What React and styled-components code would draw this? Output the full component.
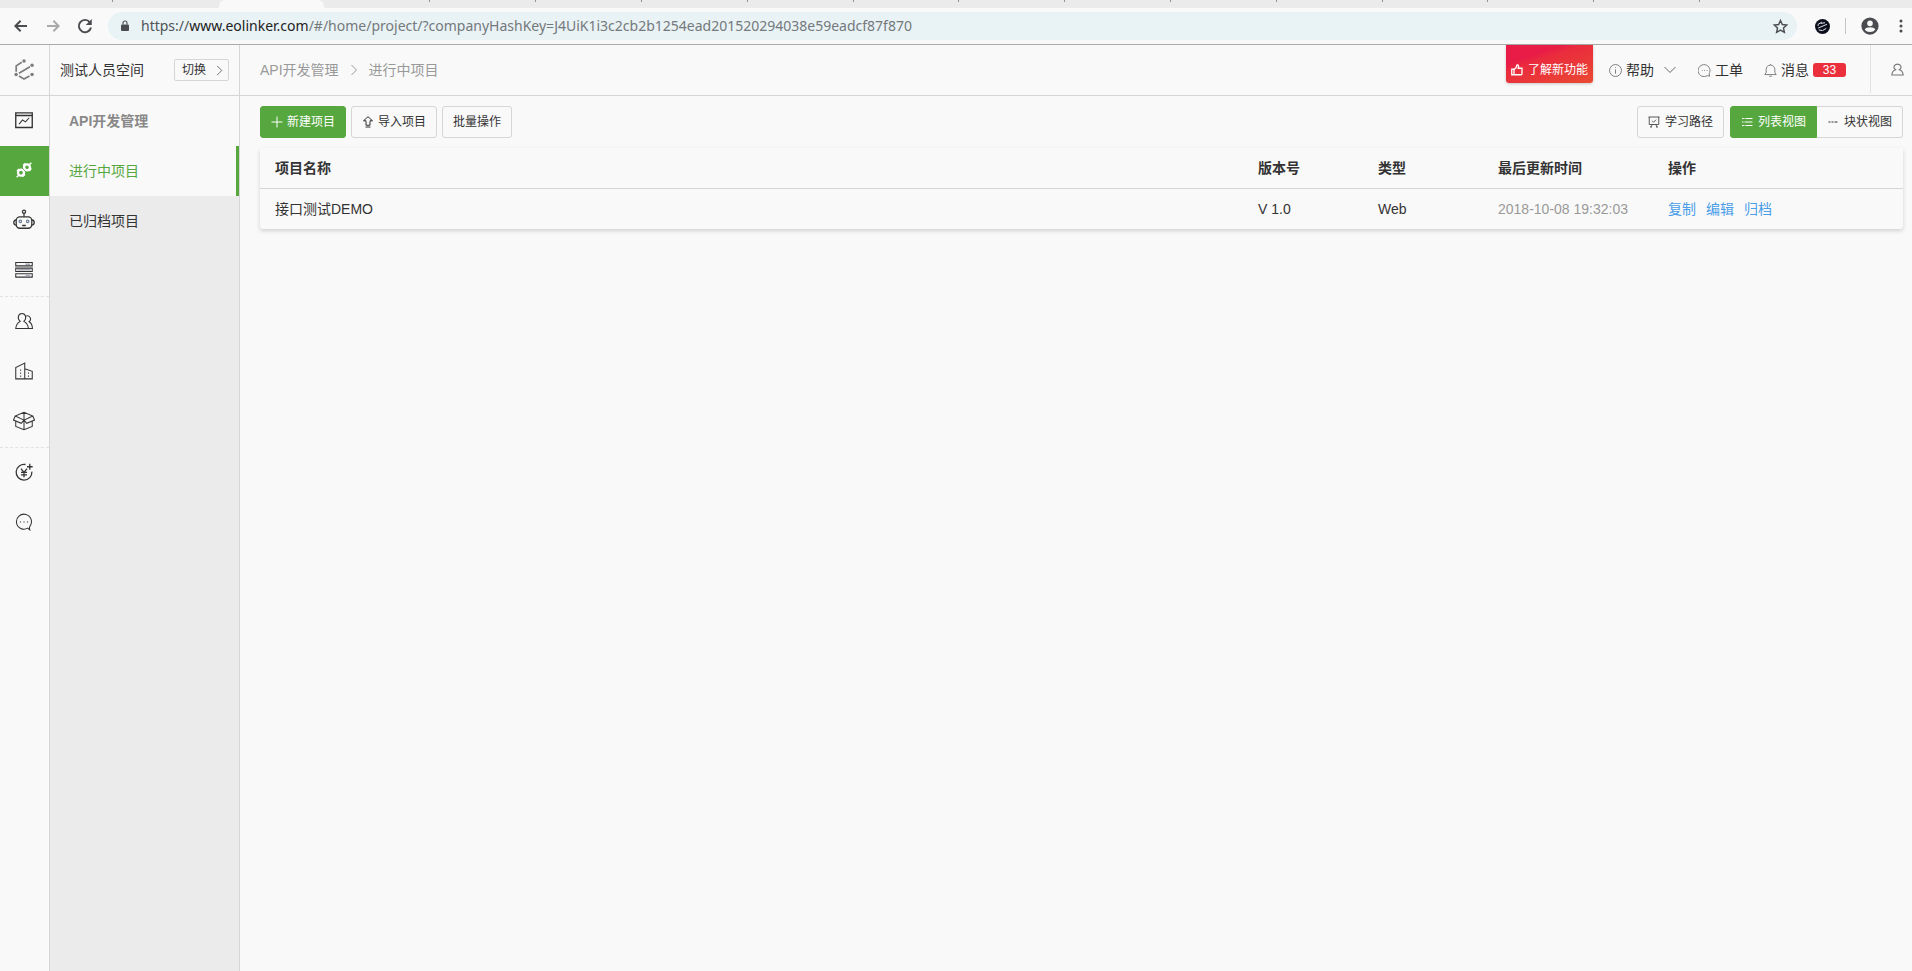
import React from "react";
import styled, { createGlobalStyle } from "styled-components";

const railGroups = [
  ["monitor", "plug", "robot", "server"],
  ["users", "building", "box"],
  ["yen", "chat"],
];

const railLabels = {
  monitor: "首页",
  plug: "API开发管理",
  robot: "自动化测试",
  server: "网关",
  users: "成员",
  building: "企业",
  box: "产品",
  yen: "费用",
  chat: "反馈",
};

const projects = [
  { name: "接口测试DEMO", version: "V 1.0", type: "Web", time: "2018-10-08 19:32:03" },
];

const tabs = [1, 2, 3, 4, 5, 6, 7, 8, 9, 10, 11, 12, 13, 14, 15, 16];

const shapes = {
  back: <path d="M20 12H4.500M11.500 5l-7 7 7 7" strokeWidth="2.6" />,
  forward: <path d="M4 12h15.500M12.500 5l7 7-7 7" strokeWidth="2.6" />,
  reload: (
    <>
      <path d="M18.500 7A8.200 8.200 0 1 0 20 14" strokeWidth="2.6" />
      <path d="M21 2.500v8h-8z" fill="currentColor" stroke="none" />
    </>
  ),
  lock: (
    <>
      <rect x="4" y="9" width="16" height="13" rx="2" fill="currentColor" stroke="none" />
      <path d="M8 9V6a4 4 0 0 1 8 0v3" strokeWidth="2.2" />
    </>
  ),
  star: <path d="M12 3.500l2.600 5.700 6.200.7-4.600 4.200 1.300 6.100L12 17.100l-5.500 3.100 1.300-6.100-4.600-4.200 6.200-.7z" strokeWidth="2" />,
  extension: (
    <>
      <circle cx="12" cy="12" r="12" fill="#0d0f1c" stroke="none" />
      <path d="M5 11V8.500l6-3.500M9 7l7-1M5 14.500l14-6M6 17.500l6 1 6-3.500" stroke="#dfe1ea" strokeWidth="1.600" />
    </>
  ),
  account: (
    <>
      <circle cx="12" cy="12" r="11.500" fill="#4a4c50" stroke="none" />
      <circle cx="12" cy="8.500" r="3.700" fill="#f9f9f9" stroke="none" />
      <path d="M5 16.500c1.500-3.800 12.500-3.800 14 0-2.500 4.500-11.500 4.500-14 0z" fill="#f9f9f9" stroke="none" />
    </>
  ),
  more: (
    <g fill="currentColor" stroke="none">
      <circle cx="12" cy="3.500" r="2.600" />
      <circle cx="12" cy="12" r="2.600" />
      <circle cx="12" cy="20.500" r="2.600" />
    </g>
  ),
  logo: (
    <>
      <path d="M3.500 14V7.500L9.500 3.500M6.500 15.500L18.500 8.500M6.500 18.500L12 21.800l6-3.300" strokeWidth="1.900" />
      <g fill="currentColor" stroke="none">
        <circle cx="12" cy="2.200" r="1.900" />
        <circle cx="20.800" cy="6.800" r="1.900" />
        <circle cx="3.400" cy="17" r="1.900" />
        <circle cx="20.800" cy="17" r="1.900" />
      </g>
    </>
  ),
  monitor: (
    <>
      <path d="M1 2.500h22v19.500H1zM1 6h22" strokeWidth="1.800" />
      <path d="M5.500 17.500l4.500-5.500 4 2.500 5-5.500" />
    </>
  ),
  plug: (
    <>
      <circle cx="7.500" cy="16" r="4.500" strokeWidth="3.500" />
      <circle cx="16.500" cy="8" r="4.500" strokeWidth="3.500" />
      <path d="M1 23l3.500-3.500M19.500 4.500L23 1M1.500 14l3-3.500M9.500 22l4-3.500M10.500 5l4-3M20 13.500l3-4" strokeWidth="2.200" />
      <path d="M7.500 7.500l9 9" stroke="#56a73e" strokeWidth="1.200" />
    </>
  ),
  robot: (
    <>
      <rect x="3.500" y="8.500" width="17" height="12.500" rx="4" />
      <circle cx="12" cy="3" r="1.700" />
      <path d="M12 4.700v3.800M3.500 12C0 12 0 17.500 3.500 17.500M20.500 12c3.500 0 3.500 5.500 0 5.500M10 18h4" />
      <circle cx="8" cy="13.500" r="1.300" stroke="#6f7f96" />
      <circle cx="16" cy="13.500" r="1.300" stroke="#6f7f96" />
    </>
  ),
  server: (
    <>
      <path d="M1 2h22v4.500H1zM1 9.500h22V14H1zM1 17h22v4.500H1z" />
      <path d="M14 4.300h6M3 11.700h18M14 19.300h6" stroke="#a5a9b5" strokeWidth="1.800" />
    </>
  ),
  users: (
    <>
      <path d="M7 12.500C2.500 9 4 2 9.300 2s6.700 7 2.500 10.500c3.800 2 5.700 5 6 9.500H1c.4-4.500 2.400-7.500 6-9.500z" />
      <path d="M14.500 5.500c5-2 8.500 4 4.300 7.500 3 1.500 4.200 4.500 4.500 9h-5.500" />
    </>
  ),
  building: (
    <>
      <path d="M1 22.500V7.500L13 1.500v21zM13 9l10 3.500v10H13" />
      <path d="M7.500 10v11M18 14v7" strokeDasharray="1.500 2.500" />
    </>
  ),
  box: (
    <path d="M12 11L2.500 6.500 12 2.500l9.500 4zM2.500 6.500L.5 11l8.500 3.500 3-3.500 3 3.500 8.500-3.500-2-4.500M3 12.500v5.500l9 3.500 9-3.500v-5.500M12 2.500v19" strokeWidth="1.100" />
  ),
  yen: <path d="M14 2A10.500 10.500 0 1 0 22.500 11.500M16 5h7.500M19.700 1v8M8 7.500l4 5 4-5M12 12.500V19M8 12.500h8M8 15.800h8" strokeWidth="1.700" />,
  chat: (
    <>
      <path d="M17 20.200A10 10 0 1 1 20 17.500c-.8 1-1 2-.3 5z" />
      <path d="M6.500 12H8M11.300 12h1.500M16 12h1.500" />
    </>
  ),
  chevronRight: <path d="M7 2l10 10L7 22" />,
  chevronDown: <path d="M1 6l11 11L23 6" />,
  plus: <path d="M12 1v22M1 12h22" />,
  upload: <path d="M12 1.500L3 9.500h5v9h8v-9h5zM7 22h10" />,
  thumb: <path d="M1.500 10.500H6v11H1.500zM6 11l4-3.500L12 2c3-.5 4 2 2.500 6.500H22V20l-1.500 1.500H6" strokeWidth="2.600" />,
  info: <><circle cx="12" cy="12" r="11" /><path d="M12 10v8M12 6v1.500" /></>,
  ticket: <><path d="M17 21.500A11 11 0 1 1 20.500 18l1 4.500z" /><path d="M7 12h1.500M11.500 12h1.500M16 12h1.500" /></>,
  bell: <path d="M1.500 19.500h21l-2.500-4V10a8 8 0 0 0-16 0v5.500zM9.500 22.500h5M12 2V.5" />,
  user: <path d="M8.500 12.500C3 9 5.500 2 12 2s9 7 3.500 10.500c5 1.500 6.500 4.500 7 9.500h-21c.5-5 2-8 7-9.500z" />,
  board: <path d="M1 2h22M2.500 2v15h19V2M8 9.500l3 3 5-5M6 22l2.500-5M18 22l-2.500-5M4 22h4M16 22h4" strokeWidth="1.600" />,
  list: <path d="M2 5h5M9 5h14M2 12h3M7 12h16M2 19h5M9 19h14" />,
  dash: <path d="M3 12h4M9 12h4M15 12h6" strokeWidth="2" />,
};

const Icon = ({ name, size = 12, width = 1.5 }) => (
  <Svg viewBox="0 0 24 24" width={size} height={size} strokeWidth={width} aria-hidden="true">
    {shapes[name]}
  </Svg>
);

const Browser = () => (
  <header>
    <TabStrip>
      {tabs.map((tab) => (
        <BrowserTab key={tab} $active={tab === 3} $plain={tab === 2} />
      ))}
    </TabStrip>
    <AddressBar>
      <NavButton aria-label="后退"><Icon name="back" size={18} /></NavButton>
      <NavButton aria-label="前进" $muted><Icon name="forward" size={18} /></NavButton>
      <NavButton aria-label="刷新"><Icon name="reload" size={18} /></NavButton>
      <Omnibox>
        <Icon name="lock" size={12} />
        <Url>
          <span>https://</span><b>www.eolinker.com</b>/#/home/project/?companyHashKey=J4UiK1i3c2cb2b1254ead201520294038e59eadcf87f870
        </Url>
        <Icon name="star" size={17} />
      </Omnibox>
      <Extras>
        <Icon name="extension" size={15} />
        <Divider />
        <Icon name="account" size={18} />
        <Icon name="more" size={14} />
      </Extras>
    </AddressBar>
  </header>
);

const App = () => {
  return (
    <>
      <GlobalStyle />
      <Page>
        <Browser />
        <Workspace>
          <Rail>
            <Logo href="#home" aria-label="eolinker"><Icon name="logo" size={22} /></Logo>
            {railGroups.map((group) => (
              <RailGroup key={group[0]}>
                {group.map((name) => (
                  <RailLink key={name} href={`#${name}`} aria-label={railLabels[name]} $active={name === "plug"}>
                    <Icon name={name} size={name === "robot" || name === "box" ? 22 : name === "plug" ? 16 : 18} width={1.4} />
                  </RailLink>
                ))}
              </RailGroup>
            ))}
          </Rail>

          <Sidebar>
            <SpaceBar>
              <span>测试人员空间</span>
              <SwitchButton>切换<Icon name="chevronRight" size={11} /></SwitchButton>
            </SpaceBar>
            <SidebarTitle>API开发管理</SidebarTitle>
            <SidebarLink href="#active" $active>进行中项目</SidebarLink>
            <SidebarLink href="#archived">已归档项目</SidebarLink>
          </Sidebar>

          <Main>
            <TopBar>
              <Crumbs>
                <span>API开发管理</span>
                <Icon name="chevronRight" size={12} width={2} />
                <span>进行中项目</span>
              </Crumbs>
              <TopMenu>
                <NewFeature><Icon name="thumb" size={12} />了解新功能</NewFeature>
                <MenuButton $gap={22}>
                  <Icon name="info" size={13} />帮助
                  <Arrow><Icon name="chevronDown" size={12} width={2} /></Arrow>
                </MenuButton>
                <MenuButton $gap={21}><Icon name="ticket" size={13} />工单</MenuButton>
                <MenuButton $gap={24}><Icon name="bell" size={13} />消息<Badge>33</Badge></MenuButton>
                <UserButton aria-label="用户"><Icon name="user" size={13} width={2} /></UserButton>
              </TopMenu>
            </TopBar>
            <Content>
              <Toolbar>
                <ToolButton $primary><Icon name="plus" size={12} width={2} />新建项目</ToolButton>
                <ToolButton><Icon name="upload" size={12} width={2} />导入项目</ToolButton>
                <ToolButton>批量操作</ToolButton>
                <ViewTools>
                  <ToolButton><Icon name="board" size={12} />学习路径</ToolButton>
                  <ViewSwitch>
                    <ToolButton $primary><Icon name="list" size={12} width={2} />列表视图</ToolButton>
                    <ToolButton><Icon name="dash" size={12} />块状视图</ToolButton>
                  </ViewSwitch>
                </ViewTools>
              </Toolbar>
              <Table>
                <colgroup>
                  <col />
                  <Col $width={120} />
                  <Col $width={120} />
                  <Col $width={170} />
                  <Col $width={250} />
                </colgroup>
                <thead>
                  <tr>
                    <th>项目名称</th>
                    <th>版本号</th>
                    <th>类型</th>
                    <th>最后更新时间</th>
                    <th>操作</th>
                  </tr>
                </thead>
                <tbody>
                  {projects.map((project) => (
                    <tr key={project.name}>
                      <td>{project.name}</td>
                      <td>{project.version}</td>
                      <td>{project.type}</td>
                      <TimeCell>{project.time}</TimeCell>
                      <td>
                        <Actions>
                          <a href="#copy">复制</a>
                          <a href="#edit">编辑</a>
                          <a href="#archive">归档</a>
                        </Actions>
                      </td>
                    </tr>
                  ))}
                </tbody>
              </Table>
            </Content>
          </Main>
        </Workspace>
      </Page>
    </>
  );
};

export default App;

const GlobalStyle = createGlobalStyle`
  * {
    box-sizing: border-box;
  }

  body {
    margin: 0;
    background: #f9f9f9;
    color: #333;
    font: 14px/20px "Liberation Sans", "Noto Sans CJK SC", sans-serif;
  }

  button {
    font: inherit;
    color: inherit;
    cursor: pointer;
  }

  a {
    color: inherit;
    text-decoration: none;
  }
`;

const Svg = styled.svg`
  display: block;
  flex: none;
  fill: none;
  stroke: currentColor;
`;

const Page = styled.div`
  display: flex;
  flex-direction: column;
  min-height: 100vh;
`;

const TabStrip = styled.div`
  display: flex;
  height: 8px;
  padding: 0 212px 0 7px;
  overflow: hidden;
  background: #ebebeb;
`;

const BrowserTab = styled.div`
  flex: 1;
  background: ${({ $active }) => ($active ? "#f9f9f9" : "transparent")};
  border-radius: 6px 6px 0 0;
  box-shadow: ${({ $active }) => ($active ? "0 6px 0 2px #f9f9f9" : "none")};

  &::after {
    content: "";
    display: ${({ $active, $plain }) => ($active || $plain ? "none" : "block")};
    width: 1px;
    height: 2px;
    margin-left: auto;
    background: #8c9296;
  }
`;

const AddressBar = styled.div`
  display: flex;
  align-items: center;
  height: 37px;
  padding: 0 4px 0 12px;
  border-bottom: 1px solid #aaa;
  color: #4a4c50;
`;

const NavButton = styled.button`
  width: 32px;
  padding: 0;
  border: 0;
  background: none;
  color: ${({ $muted }) => ($muted ? "#aaa" : "#4a4c50")};
`;

const Omnibox = styled.div`
  display: flex;
  flex: 1;
  align-items: center;
  gap: 10px;
  min-width: 0;
  height: 28px;
  padding: 0 8px 0 11px;
  border-radius: 14px;
  background: #e9f2f5;
`;

const Url = styled.span`
  flex: 1;
  overflow: hidden;
  color: #74797c;
  font-family: "Noto Sans", sans-serif;
  font-size: 14px;
  white-space: nowrap;

  span {
    color: #4f5457;
  }

  b {
    color: #222;
    font-weight: 400;
  }
`;

const Extras = styled.div`
  display: flex;
  align-items: center;
  gap: 15px;
  margin-left: 18px;
`;

const Divider = styled.span`
  width: 1px;
  height: 16px;
  background: #c4c4c4;
`;

const Workspace = styled.div`
  display: flex;
  flex: 1;
`;

const Rail = styled.nav`
  flex: none;
  width: 50px;
  border-right: 1px solid #d6d6d6;
`;

const Logo = styled.a`
  display: flex;
  align-items: center;
  height: 51px;
  padding-left: 13px;
  border-bottom: 1px solid #d6d6d6;
  color: #7d7d7d;
`;

const RailGroup = styled.div`
  & + & {
    border-top: 1px dashed #e2e2e2;
  }
`;

const RailLink = styled.a`
  display: flex;
  align-items: center;
  justify-content: center;
  height: 50px;
  padding: 0 1px 2px 0;
  background: ${({ $active }) => ($active ? "#56a73e" : "transparent")};
  color: ${({ $active }) => ($active ? "#fff" : "#333")};
`;

const Sidebar = styled.aside`
  flex: none;
  width: 190px;
  border-right: 1px solid #d6d6d6;
  background: #ebebeb;
`;

const SpaceBar = styled.div`
  display: flex;
  align-items: center;
  justify-content: space-between;
  height: 51px;
  padding: 0 10px;
  border-bottom: 1px solid #d6d6d6;
  background: #f9f9f9;
`;

const SwitchButton = styled.button`
  display: flex;
  align-items: center;
  justify-content: space-between;
  width: 55px;
  height: 22px;
  padding: 0 3px 0 7px;
  border: 1px solid #d6d6d6;
  border-radius: 2px;
  background: #f9f9f9;
  font-size: 12px;
`;

const SidebarTitle = styled.h2`
  height: 50px;
  margin: 0;
  padding-left: 19px;
  background: #f9f9f9;
  color: #888;
  font-size: 14px;
  line-height: 50px;
`;

const SidebarLink = styled.a`
  display: block;
  height: 50px;
  padding-left: 19px;
  border-right: 3px solid ${({ $active }) => ($active ? "#56a73e" : "transparent")};
  background: ${({ $active }) => ($active ? "#f9f9f9" : "transparent")};
  color: ${({ $active }) => ($active ? "#56a73e" : "#333")};
  line-height: 50px;
`;

const Main = styled.main`
  flex: 1;
  min-width: 0;
`;

const TopBar = styled.div`
  display: flex;
  justify-content: space-between;
  height: 51px;
  padding-left: 20px;
  border-bottom: 1px solid #d6d6d6;
`;

const Crumbs = styled.div`
  display: flex;
  align-items: center;
  gap: 9px;
  color: #999;
`;

const TopMenu = styled.div`
  display: flex;
`;

const NewFeature = styled.button`
  display: flex;
  align-items: center;
  gap: 5px;
  height: 38px;
  margin-right: 16px;
  padding: 12px 5px 0;
  border: 0;
  border-radius: 0 0 3px 3px;
  background: linear-gradient(160deg, #e81c46 0%, #e81c46 28%, #ea2c3d 40%, #ea4a33 100%);
  box-shadow: 0 1px 3px rgba(0, 0, 0, 0.2);
  color: #fff;
  font-size: 12px;
`;

const MenuButton = styled.button`
  display: flex;
  align-items: center;
  gap: 4px;
  height: 50px;
  margin-right: ${({ $gap }) => $gap}px;
  padding: 0;
  border: 0;
  background: none;

  svg {
    color: #666;
  }
`;

const Arrow = styled.span`
  margin-left: 6px;
`;

const Badge = styled.span`
  width: 33px;
  border-radius: 3px;
  background: #eb2f3c;
  color: #fff;
  font-size: 12px;
  line-height: 14px;
`;

const UserButton = styled.button`
  height: 48px;
  padding: 0 8px 0 20px;
  border: 0;
  border-left: 1px solid #e2e2e2;
  background: none;
  color: #777;
`;

const Content = styled.div`
  padding: 10px 9px 10px 20px;
`;

const Toolbar = styled.div`
  display: flex;
  gap: 5px;
`;

const ToolButton = styled.button`
  display: flex;
  align-items: center;
  gap: 4px;
  height: 32px;
  padding: 0 10px;
  border: 1px solid ${({ $primary }) => ($primary ? "#56a73e" : "#d6d6d6")};
  border-radius: 3px;
  background: ${({ $primary }) => ($primary ? "#56a73e" : "#f9f9f9")};
  color: ${({ $primary }) => ($primary ? "#fff" : "#333")};
  font-size: 12px;
`;

const ViewTools = styled.div`
  display: flex;
  gap: 6px;
  margin-left: auto;

  button {
    gap: 5px;
  }
`;

const ViewSwitch = styled.div`
  display: flex;

  button:first-child {
    border-radius: 3px 0 0 3px;
  }

  button:last-child {
    border-left: 0;
    border-radius: 0 3px 3px 0;
  }
`;

const Table = styled.table`
  width: 100%;
  margin-top: 10px;
  border-collapse: separate;
  border-spacing: 0;
  border-radius: 3px;
  box-shadow: 0 2px 4px rgba(0, 0, 0, 0.16);
  table-layout: fixed;

  th,
  td {
    height: 40px;
    padding: 0 15px;
    text-align: left;
  }

  th {
    height: 41px;
    border-bottom: 1px solid #d6d6d6;
  }
`;

const Col = styled.col`
  width: ${({ $width }) => $width}px;
`;

const TimeCell = styled.td`
  color: #999;
`;

const Actions = styled.div`
  display: flex;
  gap: 10px;
  color: #4a9de8;
`;
